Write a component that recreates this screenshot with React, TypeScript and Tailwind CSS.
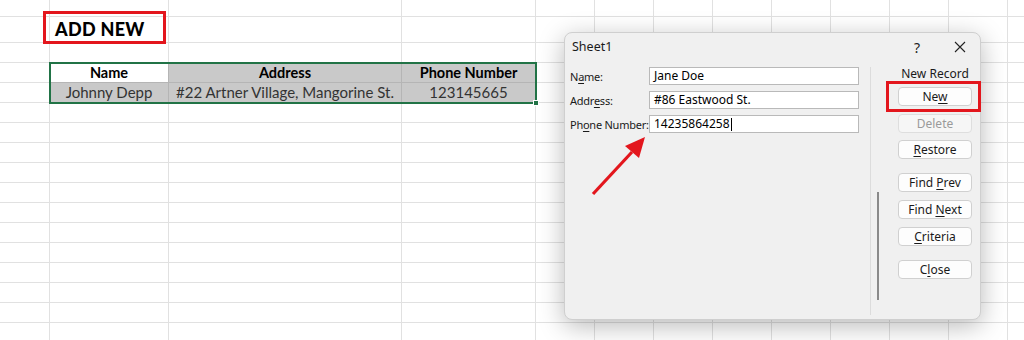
import React from 'react';

const NUM_COLS = 13;
const NUM_ROWS = 17;

const sheetFont = { fontFamily: 'Lato, "Open Sans", sans-serif' };
const uiFont = { fontFamily: '"Noto Sans", "Open Sans", sans-serif' };

function Cell({ r, c }: { r: number; c: number }) {
  // title cell
  if (r === 1 && c === 1) {
    return (
      <div className="flex items-center pl-[5px] border-r border-b border-[#e1e1e1] bg-white overflow-visible whitespace-nowrap">
        <span className="text-[18px] font-black text-black tracking-[0.3px]">ADD NEW</span>
      </div>
    );
  }
  // table header
  if (r === 3 && c >= 1 && c <= 3) {
    const label = ['Name', 'Address', 'Phone Number'][c - 1];
    return (
      <div
        className={
          c === 1
            ? 'flex items-center justify-center border-r border-b border-[#b5b5b5] bg-white'
            : 'flex items-center justify-center border-r border-b border-[#b5b5b5] bg-[#c9c9c9]'
        }
      >
        <span className="text-[14.5px] font-bold text-black">{label}</span>
      </div>
    );
  }
  // table data row
  if (r === 4 && c >= 1 && c <= 3) {
    const value = ['Johnny Depp', '#22 Artner Village, Mangorine St.', '123145665'][c - 1];
    return (
      <div className="flex items-center justify-center border-r border-b border-[#b5b5b5] bg-[#c9c9c9] whitespace-nowrap">
        <span className="text-[15px] text-[#333]">{value}</span>
      </div>
    );
  }
  return <div className="border-r border-b border-[#e1e1e1] bg-white" />;
}

function Btn({ label, u, disabled, className }: { label: string; u?: number; disabled?: boolean; className: string }) {
  return (
    <div
      className={
        'h-[19px] w-[74px] flex items-center justify-center rounded-[4px] border text-[12px] leading-none whitespace-nowrap ' +
        (disabled ? 'border-[#dedede] bg-[#f6f6f6] text-[#9a9a9a] ' : 'border-[#d0d0d0] bg-[#fdfdfd] text-[#1a1a1a] ') +
        className
      }
    >
      {u === undefined ? (
        label
      ) : (
        <span>
          {label.slice(0, u)}
          <span className="underline underline-offset-2">{label[u]}</span>
          {label.slice(u + 1)}
        </span>
      )}
    </div>
  );
}

function Field({ label, u, value, caret }: { label: string; u: number; value: string; caret?: boolean }) {
  return (
    <div className="flex items-center h-[18px]">
      <div className="w-[79px] flex-none text-[11px] tracking-[-0.25px] text-[#1a1a1a] leading-none whitespace-nowrap">
        {label.slice(0, u)}
        <span className="underline underline-offset-2">{label[u]}</span>
        {label.slice(u + 1)}
      </div>
      <div className="w-[210px] flex-none h-[18px] border border-[#b9b9b9] bg-white flex items-center pl-[4px] text-[12px] text-black leading-none">
        {value}
        {caret && <span className="inline-block w-px h-[13px] bg-black ml-px" />}
      </div>
    </div>
  );
}

export default function App() {
  const cells = [];
  for (let r = 0; r < NUM_ROWS; r++) {
    for (let c = 0; c < NUM_COLS; c++) {
      cells.push(<Cell key={r + '-' + c} r={r} c={c} />);
    }
  }

  return (
    <div className="relative w-[1024px] h-[340px] overflow-hidden bg-white">
      {/* sheet grid */}
      <div
        className="grid grid-cols-[50px_119px_233px_134px_repeat(9,59px)] grid-rows-[17px_26px_repeat(15,20px)]"
        style={sheetFont}
      >
        {cells}
      </div>

      {/* annotation box around title */}
      <div className="absolute left-[43px] top-[11px] w-[123px] h-[33px] border-[3px] border-[#e3161d]" />

      {/* selection outline */}
      <div className="absolute left-[49px] top-[62px] w-[488px] h-[42px] border-2 border-[#217346]" />
      <div className="absolute left-[533px] top-[100px] w-[6px] h-[6px] bg-[#217346] border border-white" />

      {/* Data form dialog */}
      <div
        className="absolute left-[564px] top-[32px] w-[417px] h-[288px] rounded-[8px] border border-[#cfcfcf] bg-[#f0f0f0] shadow-[0_6px_26px_rgba(0,0,0,0.28)] flex flex-col"
        style={uiFont}
      >
        <div className="h-[26px] flex items-center pl-[7px] pt-[2px]">
          <span className="text-[12.5px] text-[#1a1a1a]">Sheet1</span>
          <div className="ml-auto flex items-center gap-[13px] pr-[5px]">
            <div className="w-[30px] flex justify-center text-[14px] text-[#222]">?</div>
            <div className="w-[30px] flex justify-center">
              <svg width="12" height="12" viewBox="0 0 12 12">
                <path d="M1 1L11 11M11 1L1 11" stroke="#222" strokeWidth="1.1" />
              </svg>
            </div>
          </div>
        </div>

        <div className="flex flex-1 pt-[8px] pb-[4px]">
          <div className="w-[305px] pl-[5px] flex flex-col gap-[6px]">
            <Field label="Name:" u={1} value="Jane Doe" />
            <Field label="Address:" u={4} value="#86 Eastwood St." />
            <Field label="Phone Number:" u={2} value="14235864258" caret />
          </div>
          <div className="w-px bg-[#dcdcdc]" />
          <div className="w-[27px] pl-[6px]">
            <div className="mt-[125px] w-[2px] h-[108px] bg-[#8a8a8a]" />
          </div>
          <div className="flex flex-col w-[74px]">
            <div className="h-[14px] flex items-center justify-center text-[12px] text-[#1a1a1a] whitespace-nowrap">
              New Record
            </div>
            <Btn label="New" u={2} className="mt-[6px]" />
            <Btn label="Delete" disabled className="mt-[8px]" />
            <Btn label="Restore" u={0} className="mt-[7px]" />
            <Btn label="Find Prev" u={5} className="mt-[14px]" />
            <Btn label="Find Next" u={5} className="mt-[8px]" />
            <Btn label="Criteria" u={0} className="mt-[8px]" />
            <Btn label="Close" u={1} className="mt-[14px]" />
          </div>
        </div>
      </div>

      {/* annotation box around New */}
      <div className="absolute left-[886px] top-[81px] w-[95px] h-[31px] border-[3px] border-[#e3161d]" />

      {/* annotation arrow */}
      <svg className="absolute left-[580px] top-[130px]" width="80" height="80" viewBox="0 0 80 80">
        <line x1="13" y1="64" x2="52" y2="22" stroke="#e3161d" strokeWidth="3.2" />
        <polygon points="65,7 45,16 59,28" fill="#e3161d" />
      </svg>
    </div>
  );
}
